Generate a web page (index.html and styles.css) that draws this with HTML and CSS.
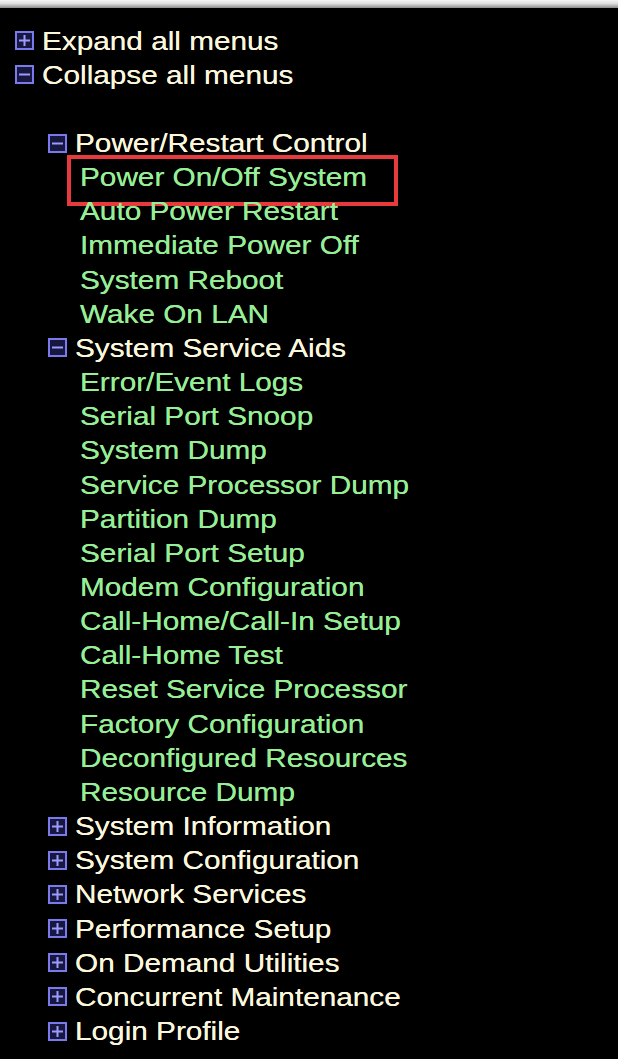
FILE: index.html
```html
<!DOCTYPE html>
<html>
<head>
<meta charset="utf-8">
<link rel="stylesheet" href="styles.css">
</head>
<body>
<div class="topbar"></div>
<div class="menu">
  <div class="row lvl1"><svg class="tog" viewBox="0 0 19 19"><rect x="1" y="1" width="17" height="17"/><path d="M4 9.5H15M9.5 4V15"/></svg><span class="t head">Expand all menus</span></div>
  <div class="row lvl1"><svg class="tog" viewBox="0 0 19 19"><rect x="1" y="1" width="17" height="17"/><path d="M4 9.5H15"/></svg><span class="t head">Collapse all menus</span></div>
  <div class="row blank"></div>

  <div class="row lvl2"><svg class="tog" viewBox="0 0 19 19"><rect x="1" y="1" width="17" height="17"/><path d="M4 9.5H15"/></svg><span class="t head">Power/Restart Control</span></div>
  <div class="row item marked"><span class="t link">Power On/Off System</span><span class="mark"></span></div>
  <div class="row item"><span class="t link">Auto Power Restart</span></div>
  <div class="row item"><span class="t link">Immediate Power Off</span></div>
  <div class="row item"><span class="t link">System Reboot</span></div>
  <div class="row item"><span class="t link">Wake On LAN</span></div>

  <div class="row lvl2"><svg class="tog" viewBox="0 0 19 19"><rect x="1" y="1" width="17" height="17"/><path d="M4 9.5H15"/></svg><span class="t head">System Service Aids</span></div>
  <div class="row item"><span class="t link">Error/Event Logs</span></div>
  <div class="row item"><span class="t link">Serial Port Snoop</span></div>
  <div class="row item"><span class="t link">System Dump</span></div>
  <div class="row item"><span class="t link">Service Processor Dump</span></div>
  <div class="row item"><span class="t link">Partition Dump</span></div>
  <div class="row item"><span class="t link">Serial Port Setup</span></div>
  <div class="row item"><span class="t link">Modem Configuration</span></div>
  <div class="row item"><span class="t link">Call-Home/Call-In Setup</span></div>
  <div class="row item"><span class="t link">Call-Home Test</span></div>
  <div class="row item"><span class="t link">Reset Service Processor</span></div>
  <div class="row item"><span class="t link">Factory Configuration</span></div>
  <div class="row item"><span class="t link">Deconfigured Resources</span></div>
  <div class="row item"><span class="t link">Resource Dump</span></div>

  <div class="row lvl2"><svg class="tog" viewBox="0 0 19 19"><rect x="1" y="1" width="17" height="17"/><path d="M4 9.5H15M9.5 4V15"/></svg><span class="t head">System Information</span></div>
  <div class="row lvl2"><svg class="tog" viewBox="0 0 19 19"><rect x="1" y="1" width="17" height="17"/><path d="M4 9.5H15M9.5 4V15"/></svg><span class="t head">System Configuration</span></div>
  <div class="row lvl2"><svg class="tog" viewBox="0 0 19 19"><rect x="1" y="1" width="17" height="17"/><path d="M4 9.5H15M9.5 4V15"/></svg><span class="t head">Network Services</span></div>
  <div class="row lvl2"><svg class="tog" viewBox="0 0 19 19"><rect x="1" y="1" width="17" height="17"/><path d="M4 9.5H15M9.5 4V15"/></svg><span class="t head">Performance Setup</span></div>
  <div class="row lvl2"><svg class="tog" viewBox="0 0 19 19"><rect x="1" y="1" width="17" height="17"/><path d="M4 9.5H15M9.5 4V15"/></svg><span class="t head">On Demand Utilities</span></div>
  <div class="row lvl2"><svg class="tog" viewBox="0 0 19 19"><rect x="1" y="1" width="17" height="17"/><path d="M4 9.5H15M9.5 4V15"/></svg><span class="t head">Concurrent Maintenance</span></div>
  <div class="row lvl2"><svg class="tog" viewBox="0 0 19 19"><rect x="1" y="1" width="17" height="17"/><path d="M4 9.5H15M9.5 4V15"/></svg><span class="t head">Login Profile</span></div>
</div>
</body>
</html>
```

FILE: styles.css
```css
html, body {
  margin: 0;
  padding: 0;
  background: #000;
  height: 100%;
}
body {
  font-family: "Liberation Sans", Arial, sans-serif;
  font-size: 25px;
  overflow: hidden;
}
.topbar {
  height: 8px;
  background: linear-gradient(#f6f6f6, #dedede 45%, #8c8c8c);
}
.menu {
  padding-top: 15.5px;
}
.row {
  height: 34.17px;
  line-height: 34.17px;
  display: flex;
  align-items: center;
  white-space: nowrap;
}
.blank {
  height: 34.17px;
}
.lvl1 {
  padding-left: 15px;
}
.lvl2 {
  padding-left: 48px;
}
.item {
  padding-left: 80px;
}
.tog {
  width: 19px;
  height: 19px;
  flex: none;
  margin-right: 8px;
}
.tog rect {
  fill: #17173f;
  stroke: #7a7aec;
  stroke-width: 2;
}
.tog path {
  stroke: #9c9cff;
  stroke-width: 2;
  fill: none;
}
.t {
  display: inline-block;
  transform: scaleX(1.19);
  transform-origin: 0 50%;
  text-shadow: 0 0 0.6px currentColor;
}
.head {
  color: #fbf7dc;
}
.link {
  color: #96ee96;
}
.marked {
  position: relative;
}
.mark {
  position: absolute;
  left: 67px;
  top: -5px;
  width: 323px;
  height: 43px;
  border: 4px solid #e63a3c;
}
```
